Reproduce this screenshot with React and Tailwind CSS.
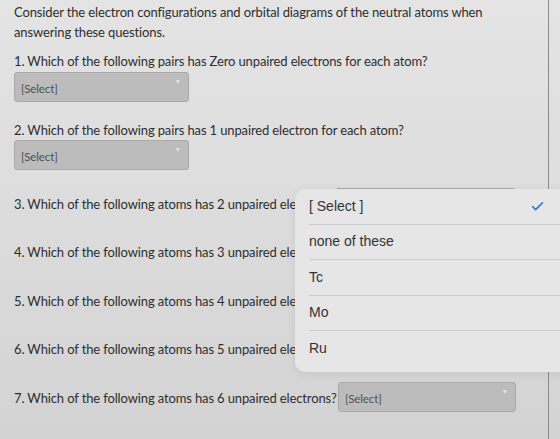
import { Check } from 'lucide-react'

const questions = [
  '3. Which of the following atoms has 2 unpaired electrons?',
  '4. Which of the following atoms has 3 unpaired electrons?',
  '5. Which of the following atoms has 4 unpaired electrons?',
  '6. Which of the following atoms has 5 unpaired electrons?',
]

const options = ['[ Select ]', 'none of these', 'Tc', 'Mo', 'Ru']

const SelectBox = ({ label = '[Select]', width = 'w-[175px]' }) => (
  <div className={`relative h-[30px] rounded-[3px] border border-[#a9a9a9] bg-[#bcbcbc] ${width}`}>
    {label && (
      <span className="absolute left-[6px] top-[7px] text-[11.5px] text-[#505050]">{label}</span>
    )}
    <span className="absolute right-[7px] top-[3px] text-[7px] text-[#e2e2e2]">▼</span>
  </div>
)

const App = () => {
  return (
    <div
      className="relative h-[439px] w-[560px] overflow-hidden bg-linear-to-b from-[#e4e4e4] via-[#dcdcdc] to-[#d3d3d3] text-[#2e2e2e]"
      style={{ fontFamily: 'Lato, "Noto Sans", sans-serif' }}
    >
      <div className="h-full w-[549px] border-r border-[#8a8a8a] pl-[14px] pt-[2px] tracking-[-0.13px]">
        <p className="text-[13px] leading-[20px]">
          Consider the electron configurations and orbital diagrams of the neutral atoms when
          <br />
          answering these questions.
        </p>

        <p className="mt-[9px] text-[13px] leading-[20px]">
          1. Which of the following pairs has Zero unpaired electrons for each atom?
        </p>
        <div className="mt-[1px]">
          <SelectBox />
        </div>

        <p className="mt-[18px] text-[13px] leading-[20px]">
          2. Which of the following pairs has 1 unpaired electron for each atom?
        </p>
        <div>
          <SelectBox />
        </div>

        <div className="mt-[18px] flex flex-col gap-[18.5px]">
          {questions.map((q) => (
            <div key={q} className="flex h-[30px] items-center">
              {/* question text runs under the open picker */}
              <span className="w-[281px] overflow-hidden whitespace-nowrap pt-[3px] text-[13px]">{q}</span>
              <div className="ml-[40px]">
                <SelectBox label="" width="w-[181px]" />
              </div>
            </div>
          ))}
          <div className="flex h-[30px] items-center">
            <span className="w-[324px] whitespace-nowrap pt-[3px] text-[13px]">
              7. Which of the following atoms has 6 unpaired electrons?
            </span>
            <SelectBox width="w-[178px]" />
          </div>
        </div>
      </div>

      {/* open native picker for question 3 */}
      <div
        className="absolute left-[295px] top-[189px] w-[280px] rounded-l-[10px] bg-[#e6e6e6] shadow-[0_2px_8px_rgba(0,0,0,0.08)]"
        style={{ fontFamily: '"Liberation Sans", Arial, sans-serif' }}
      >
        {options.map((opt, i) => (
          <div key={opt} className="pl-[14px]">
            <div
              className={`flex h-[35.5px] items-center pr-[30px] text-[14px] text-[#333] ${
                i < options.length - 1 ? 'border-b border-[#cdcdcd]' : ''
              }`}
            >
              <span className="flex-1">{opt}</span>
              {i === 0 && <Check size={15} strokeWidth={2.5} className="text-[#2f6fd8]" />}
            </div>
          </div>
        ))}
        <div className="h-[5px]" />
      </div>
    </div>
  )
}

export default App
